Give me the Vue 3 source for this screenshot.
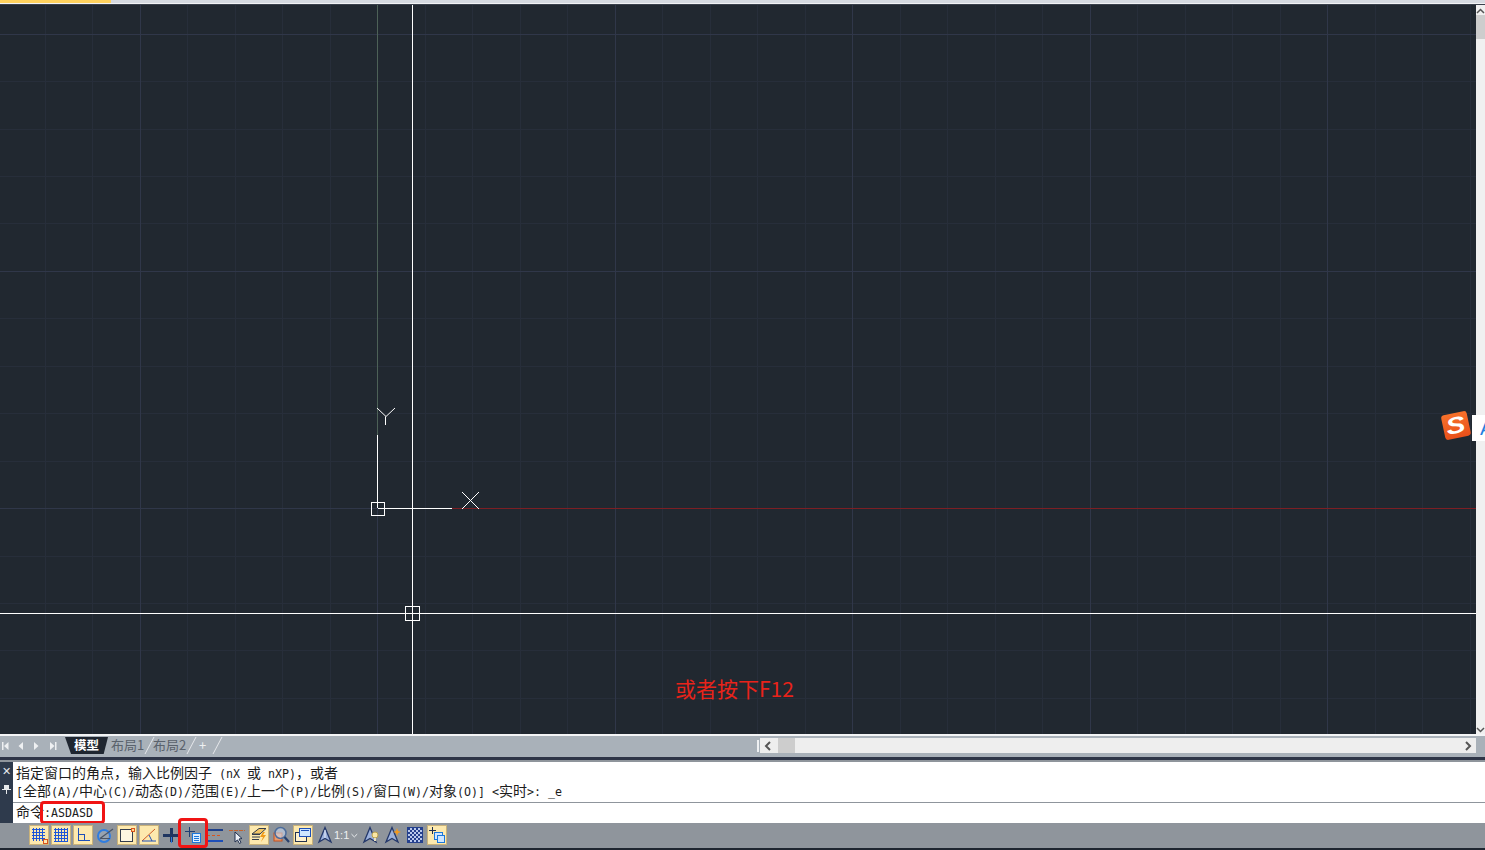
<template>
  <div class="app">
    <div class="title-strip"><div class="progress"></div></div>

    <div class="work">
      <div class="canvas">
        <svg class="drawing" width="1476" height="729" viewBox="0 5 1476 729">
          <g stroke="#272e3a" stroke-width="1">
            <line v-for="x in minorX" :key="'x' + x" :x1="x" y1="5" :x2="x" y2="734" />
            <line v-for="y in minorY" :key="'y' + y" x1="0" :y1="y" x2="1476" :y2="y" />
          </g>
          <g stroke="#303749" stroke-width="1">
            <line v-for="x in majorX" :key="'mx' + x" :x1="x" y1="5" :x2="x" y2="734" />
            <line v-for="y in majorY" :key="'my' + y" x1="0" :y1="y" x2="1476" :y2="y" />
          </g>
          <g fill="none" stroke-width="1" shape-rendering="crispEdges">
            <line x1="377.5" y1="5" x2="377.5" y2="435" stroke="#4d6157" />
            <line x1="377.5" y1="435" x2="377.5" y2="508" stroke="#fff" />
            <line x1="378" y1="508.5" x2="452" y2="508.5" stroke="#fff" />
            <line x1="452" y1="508.5" x2="1476" y2="508.5" stroke="#7c1f24" />
            <rect x="371.5" y="502.5" width="13" height="13" stroke="#fff" />
            <line x1="412.5" y1="5" x2="412.5" y2="734" stroke="#fff" />
            <line x1="0" y1="613.5" x2="1476" y2="613.5" stroke="#fff" />
            <rect x="405.5" y="606.5" width="14" height="14" stroke="#fff" />
          </g>
          <g fill="none" stroke="#fff" stroke-width="1">
            <path d="M377 408l9 8.500 9-8.500M385.500 416.500v8.500" />
            <path d="M462 492l17 17M479 492l-17 17" />
          </g>
        </svg>
        <div class="note">或者按下F12</div>
      </div>
      <div class="vscroll">
        <svg class="arrow" width="9" height="8" viewBox="0 0 9 8"><path d="M1 6l3.500-3.500L8 6" fill="none" stroke="#555" stroke-width="1.500" /></svg>
        <div class="vthumb"></div>
        <div class="vspacer"></div>
        <svg class="arrow" width="9" height="8" viewBox="0 0 9 8"><path d="M1 2l3.500 3.500L8 2" fill="none" stroke="#555" stroke-width="1.500" /></svg>
      </div>
      <div class="ime">
        <div class="ime-strip">A</div>
        <div class="ime-logo"><span>S</span></div>
      </div>
    </div>

    <div class="tabbar">
      <div class="tab-nav">
        <svg width="65" height="16" viewBox="0 0 65 16" fill="#eef0f2">
          <path d="M2 4h1.500v8H2zM8.500 4v8L4 8zM23 4v8l-4.500-4zM34 4v8l4.500-4zM50 4v8l4.500-4zM55 4h1.500v8H55z" />
        </svg>
      </div>
      <div class="tabs">
        <span class="tab active">模型</span>
        <span class="tab">布局1</span>
        <span class="tab">布局2</span>
        <span class="tab plus">+</span>
      </div>
      <div class="tab-fill"><i></i></div>
      <div class="hscroll">
        <svg width="16" height="14" viewBox="0 0 16 14"><path d="M10 3L6 7l4 4" fill="none" stroke="#555" stroke-width="2" /></svg>
        <div class="hthumb"></div>
        <div class="hspacer"></div>
        <svg width="16" height="14" viewBox="0 0 16 14"><path d="M6 3l4 4-4 4" fill="none" stroke="#555" stroke-width="2" /></svg>
      </div>
    </div>

    <div class="dark-strip"></div>

    <div class="command">
      <div class="cmd-side">
        <span class="close">✕</span>
        <svg width="9" height="10" viewBox="0 0 9 10"><path d="M2 1h5v4h2v1H5v4H4V6H0V5h2z" fill="#e6e9ec" /></svg>
      </div>
      <div class="cmd-body">
        <div class="history">
          <div v-for="(line, i) in historyLines" :key="i" class="line">
            <span v-for="(seg, j) in splitText(line)" :key="j" :class="seg.latin ? 'latin' : ''">{{ seg.text }}</span>
          </div>
        </div>
        <div class="input-line">
          <span>命令</span><span class="latin">:ASDASD</span>
        </div>
      </div>
      <div class="mark mark-input"></div>
    </div>

    <div class="statusbar">
      <!-- snap -->
      <span class="ico on">
        <svg width="18" height="18" viewBox="0 0 18 18" shape-rendering="crispEdges"><path d="M3.500 2v13M6.500 2v13M9.500 2v13M12.500 2v13M2 3.500h13M2 6.500h13M2 9.500h13M2 12.500h13" stroke="#1d56d8" fill="none" /><rect x="13" y="13" width="4" height="4" fill="#ffe9b0" stroke="#d9541e" /></svg>
      </span>
      <!-- grid -->
      <span class="ico on">
        <svg width="18" height="18" viewBox="0 0 18 18" shape-rendering="crispEdges"><path d="M3.500 2v14M6.500 2v14M9.500 2v14M12.500 2v14M15.500 2v14M2 3.500h14M2 6.500h14M2 9.500h14M2 12.500h14M2 15.500h14" stroke="#1d56d8" fill="none" /></svg>
      </span>
      <!-- ortho -->
      <span class="ico on">
        <svg width="18" height="18" viewBox="0 0 18 18" shape-rendering="crispEdges"><path d="M4.500 2v12.500H16" stroke="#1d4fb8" fill="none" /><path d="M4.500 8.500H10v6" stroke="#1d4fb8" fill="none" /></svg>
      </span>
      <!-- polar -->
      <span class="ico">
        <svg width="18" height="18" viewBox="0 0 18 18"><circle cx="8" cy="10" r="6" fill="#a9bcd6" fill-opacity=".35" stroke="#2f7de0" stroke-width="2" /><path d="M4 12.500L17 3" stroke="#4a5568" stroke-width="1.200" /><path d="M4 12.500h10" stroke="#4a5568" stroke-width="1" /></svg>
      </span>
      <!-- osnap -->
      <span class="ico on">
        <svg width="18" height="18" viewBox="0 0 18 18" shape-rendering="crispEdges"><rect x="2.500" y="3.500" width="12" height="12" fill="#fdf6e0" stroke="#333c4c" /><rect x="13" y="2" width="3" height="3" fill="#ffd98a" stroke="#d9541e" /></svg>
      </span>
      <!-- otrack -->
      <span class="ico on">
        <svg width="18" height="18" viewBox="0 0 18 18"><path d="M2 15L15 3" stroke="#d05a25" stroke-width="1" fill="none" /><path d="M2 15h14" stroke="#1d4fb8" stroke-width="1" /><path d="M9 9l3 6" stroke="#1d4fb8" stroke-width="1" fill="none" /></svg>
      </span>
      <!-- dyn -->
      <span class="ico">
        <svg width="18" height="18" viewBox="0 0 18 18" shape-rendering="crispEdges"><path d="M8 2h3v14H8z" fill="#1f3560" /><path d="M1 8h15v3H1z" fill="#1f3560" /><path d="M9 11h1v6H9z" fill="#2a7be0" /></svg>
      </span>
      <!-- new one, marked in red -->
      <span class="ico">
        <svg width="18" height="18" viewBox="0 0 18 18" shape-rendering="crispEdges"><path d="M5.500 1v10M1 5.500h10" stroke="#1f3f73" fill="none" /><rect x="8.500" y="7.500" width="8" height="9" fill="#dff0ff" stroke="#1b78dc" /><path d="M10 10.500h5M10 12.500h5M10 14.500h5" stroke="#1b78dc" /></svg>
      </span>
      <!-- lineweight -->
      <span class="ico">
        <svg width="18" height="18" viewBox="0 0 18 18" shape-rendering="crispEdges"><path d="M1 3h16v2H1z" fill="#1d3f8a" /><path d="M1 9.500h3M6 9.500h3M11 9.500h3" stroke="#d9541e" fill="none" /><path d="M1 14h16v2H1z" fill="#1d4fb8" /></svg>
      </span>
      <!-- selection cycling -->
      <span class="ico">
        <svg width="18" height="18" viewBox="0 0 18 18"><path d="M1 4.500h16" stroke="#c4622d" stroke-dasharray="4 1" /><path d="M7 6v10l2.500-2 2 3.500 1.500-1-2-3.500 3-.5z" fill="#eef1f6" stroke="#1f2f4f" /></svg>
      </span>
      <!-- 3d osnap -->
      <span class="ico on">
        <svg width="18" height="18" viewBox="0 0 18 18"><path d="M2 8L9 2.500h7L10 8z" fill="#f4c766" stroke="#333c4c" /><path d="M2 8.500h8M2 11h8M2 13.500h7" stroke="#333c4c" /><path d="M13 6l-3 5h3l-2 5 5-7h-3l2-3z" fill="#f09a18" /></svg>
      </span>
      <!-- dynamic ucs -->
      <span class="ico">
        <svg width="18" height="18" viewBox="0 0 18 18"><rect x="2" y="7" width="8" height="8" fill="#e89a6e" stroke="#c3501e" /><circle cx="8.500" cy="7" r="5.500" fill="#c8d8ee" fill-opacity=".6" stroke="#4c6c9c" stroke-width="1.500" /><path d="M12.500 11l4.500 5" stroke="#27406e" stroke-width="2.200" /></svg>
      </span>
      <!-- model / paper -->
      <span class="ico on">
        <svg width="18" height="18" viewBox="0 0 18 18" shape-rendering="crispEdges"><rect x="1.500" y="6.500" width="11" height="9" fill="#fff2cf" stroke="#23324f" /><rect x="5.500" y="2.500" width="11" height="8" fill="#cfe6ff" stroke="#1d4fb8" /><path d="M7 4h8v1H7z" fill="#1d4fb8" /></svg>
      </span>
      <!-- annotation -->
      <span class="ico">
        <svg width="18" height="18" viewBox="0 0 18 18"><path d="M9 1.500L3 16l6-3.500 6 3.500z" fill="#9db2dc" stroke="#24386a" stroke-width="1.300" /><path d="M9 4v8" stroke="#e8eefa" /></svg>
      </span>
      <span class="scale">1:1<svg width="7" height="5" viewBox="0 0 7 5"><path d="M.5 1l3 3 3-3" fill="none" stroke="#eef0f2" /></svg></span>
      <span class="ico">
        <svg width="18" height="18" viewBox="0 0 18 18"><path d="M8 1.500L2 16l6-3.500 6 3.500z" fill="#9db2dc" stroke="#24386a" stroke-width="1.300" /><circle cx="13" cy="9" r="3" fill="#fbe8a6" stroke="#b9a04e" /><path d="M12 12h2v3h-2z" fill="#e8e0c0" /></svg>
      </span>
      <span class="ico">
        <svg width="18" height="18" viewBox="0 0 18 18"><path d="M8 1.500L2 16l6-3.500 6 3.500z" fill="#9db2dc" stroke="#24386a" stroke-width="1.300" /><path d="M13 2l1 3 3 1-3 1-1 3-1-3-3-1 3-1z" fill="#f59a1c" /></svg>
      </span>
      <span class="ico">
        <svg width="18" height="18" viewBox="0 0 18 18"><defs><pattern id="chk" width="4" height="4" patternUnits="userSpaceOnUse"><rect width="4" height="4" fill="#b9c8ec" /><rect width="2" height="2" fill="#24408e" /><rect x="2" y="2" width="2" height="2" fill="#24408e" /></pattern></defs><rect x="1.500" y="1.500" width="15" height="15" fill="url(#chk)" stroke="#24408e" /></svg>
      </span>
      <span class="ico on">
        <svg width="18" height="18" viewBox="0 0 18 18" shape-rendering="crispEdges"><path d="M4.500 1v7M1 4.500h7" stroke="#1f2f4f" fill="none" /><rect x="6.500" y="6.500" width="8" height="7" fill="#cfe6ff" stroke="#1b78dc" /><rect x="9.500" y="9.500" width="7" height="7" fill="#cfe6ff" stroke="#1b78dc" /></svg>
      </span>
      <div class="mark mark-icon"></div>
    </div>
    <div class="bottom-edge"></div>
  </div>
</template>

<script setup>
// grid lines repeat about every 47.5px, each fifth one is stronger
const makeLines = (start, max, step) => {
  const list = []
  for (let v = start; v < max; v += step) list.push(Math.floor(v) + 0.5)
  return list
}

const minorX = makeLines(45, 1476, 47.5)
const minorY = makeLines(34.1, 734, 47.45)
const majorX = makeLines(140, 1476, 47.5).filter((_, i) => i % 5 === 0)
const majorY = makeLines(34.1, 734, 47.45).filter((_, i) => i % 5 === 0)

const historyLines = [
  '指定窗口的角点，输入比例因子 (nX 或 nXP)，或者',
  '[全部(A)/中心(C)/动态(D)/范围(E)/上一个(P)/比例(S)/窗口(W)/对象(O)] <实时>: _e'
]

// ascii runs get the narrower mono font
const splitText = (text) =>
  text
    .split(/([\x20-\x7e]+)/)
    .filter(Boolean)
    .map((t) => ({ text: t, latin: /^[\x20-\x7e]+$/.test(t) }))
</script>

<style>
html, body { margin: 0; background: #8f959c; overflow: hidden; }
</style>

<style scoped>
.app { width: 1485px; height: 850px; display: flex; flex-direction: column; position: relative; overflow: hidden; font-family: "Noto Sans CJK SC", "Liberation Sans", sans-serif; }

.title-strip { height: 5px; background: linear-gradient(#d6dae0 0 3px, #f2f3f5 3px 4px, #3a414c 4px); flex: none; }
.progress { width: 111px; height: 3px; background: #ffd25e; }

.work { height: 729px; display: flex; flex: none; position: relative; }
.canvas { width: 1476px; background: #212830; position: relative; overflow: hidden; }
.drawing { display: block; }
.note { position: absolute; left: 675px; top: 669px; font-size: 21px; line-height: 28px; color: #e8231a; }

.ime { position: absolute; left: 1440px; top: 405px; width: 45px; height: 38px; overflow: hidden; }
.ime-strip { position: absolute; left: 32px; top: 5px; width: 13px; height: 26px; background: #fff; color: #1f7fe0; font: 400 20px/26px "Liberation Sans", sans-serif; text-indent: 8px; overflow: hidden; }
.ime-logo { position: absolute; left: 3px; top: 3px; width: 26px; height: 25px; border-radius: 3px; background: linear-gradient(#f7712a, #e9501a); transform: rotate(-12deg); display: flex; align-items: center; justify-content: center; }
.ime-logo span { color: #fff; font: italic 700 23px/25px "Liberation Sans", sans-serif; transform: scaleX(1.25); }

.vscroll { width: 9px; background: #f0f0f0; display: flex; flex-direction: column; flex: none; }
.arrow { display: block; margin-top: 2px; flex: none; }
.vthumb { height: 24px; background: #cdcdcd; flex: none; }
.vspacer { flex: 1; }

.tabbar { height: 19px; background: #a9b1b9; border-top: 2px solid #f4f5f6; display: flex; align-items: center; flex: none; }
.tab-nav { width: 65px; height: 16px; flex: none; }
.tab-nav svg { display: block; }
.tabs { display: flex; align-items: center; height: 17px; flex: none; }
.tab { width: 42px; height: 17px; box-sizing: border-box; line-height: 15px; padding-left: 3px; font-size: 13px; color: #5a626c; position: relative; flex: none; }
.tab::after { content: ""; position: absolute; right: 0; top: 0; height: 17px; border-right: 1px solid #e6e8eb; transform: skewX(-28deg); }
.tab.active { width: 43px; background: #1f2630; color: #fff; font-weight: 700; font-size: 12.500px; clip-path: polygon(0 0, 100% 0, 90% 100%, 14% 100%); padding-left: 9px; }
.tab.active::after { display: none; }
.tab.plus { width: 26px; color: #eef0f2; padding-left: 7px; }
.tab-fill { flex: 1; display: flex; justify-content: flex-end; align-items: center; height: 100%; }
.tab-fill i { display: block; width: 2px; height: 12px; background: #eef0f2; margin-right: 1px; }
.hscroll { width: 716px; height: 15px; background: #eeeeee; display: flex; align-items: center; flex: none; margin-right: 9px; }
.hthumb { width: 17px; height: 15px; background: #cdcdcd; margin-left: 2px; }
.hspacer { flex: 1; }

.dark-strip { height: 7px; flex: none; background: linear-gradient(#a9b1b9 0 2px, #2e3547 2px 5px, #8f959c 5px); }

.command { height: 61px; display: flex; background: #2e3a4c; position: relative; flex: none; }
.cmd-side { width: 13px; flex: none; display: flex; flex-direction: column; align-items: center; gap: 6px; padding-top: 4px; box-sizing: border-box; color: #e6e9ec; }
.close { font: 700 11px/12px "DejaVu Sans", sans-serif; }
.cmd-body { flex: 1; background: #fff; display: flex; flex-direction: column; font-size: 14px; color: #1c1c1c; }
.history { height: 41px; padding-top: 1px; padding-left: 3px; box-sizing: border-box; border-bottom: 1px solid #8f959c; }
.line { height: 18px; line-height: 18px; white-space: pre; }
.input-line { height: 19px; line-height: 16px; padding-left: 3px; white-space: pre; }
.latin { font-family: "DejaVu Sans Mono", monospace; font-size: 11.640px; }
.mark { position: absolute; border: 3px solid #f01414; border-radius: 4px; box-sizing: border-box; pointer-events: none; }
.mark-input { left: 40px; top: 39px; width: 65px; height: 23px; }

.statusbar { height: 25px; padding-bottom: 1px; box-sizing: border-box; background: #8f959c; display: flex; align-items: center; gap: 4px; padding-left: 30px; position: relative; flex: none; }
.ico { width: 18px; height: 18px; display: block; flex: none; box-sizing: border-box; }
.ico svg { display: block; }
.ico.on { background: #fde9ae; box-shadow: 0 0 0 1px #c9b27a; }
.scale { width: 24px; margin-left: -4px; flex: none; display: flex; align-items: center; gap: 2px; font: 11px/18px "Liberation Sans", sans-serif; color: #eef0f2; }
.mark-icon { left: 178px; top: -5px; width: 30px; height: 30px; }
.bottom-edge { flex: 1; background: #1f2630; }
</style>
